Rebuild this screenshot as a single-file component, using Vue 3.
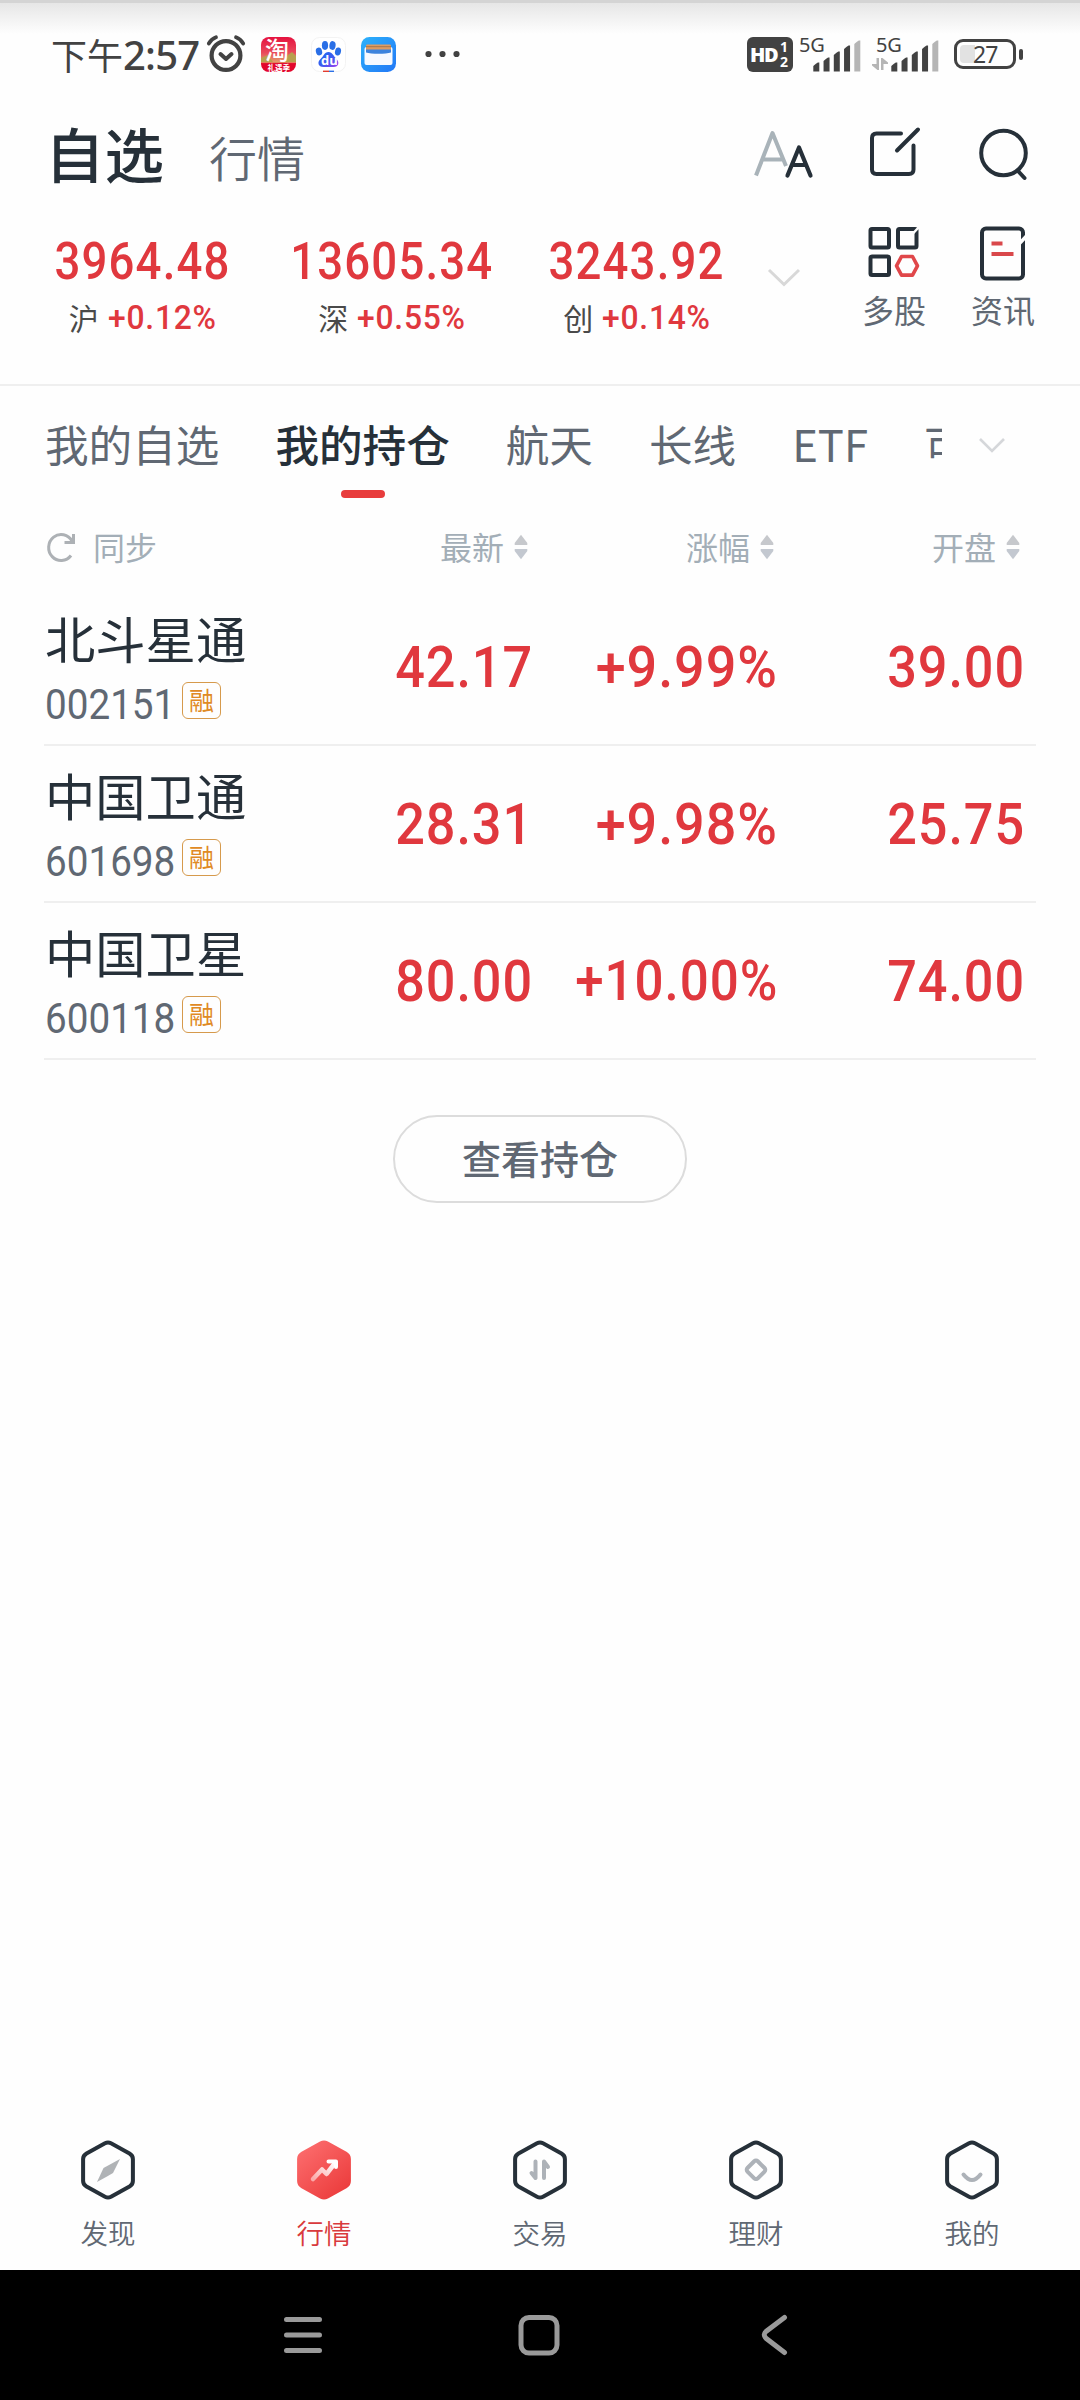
<script setup>
const indices = [
  { value: '3964.48', name: '沪', change: '+0.12%', width: 285 },
  { value: '13605.34', name: '深', change: '+0.55%', width: 214 },
  { value: '3243.92', name: '创', change: '+0.14%', width: 276 },
]
const groups = ['我的自选', '我的持仓', '航天', '长线', 'ETF', '可转债']
const columns = ['最新', '涨幅', '开盘']
const stocks = [
  { name: '北斗星通', code: '002151', last: '42.17', change: '+9.99%', open: '39.00' },
  { name: '中国卫通', code: '601698', last: '28.31', change: '+9.98%', open: '25.75' },
  { name: '中国卫星', code: '600118', last: '80.00', change: '+10.00%', open: '74.00', long: true },
]
const nav = ['发现', '行情', '交易', '理财', '我的']
const signal = [9, 14, 20, 26, 31]
</script>

<template>
  <div class="screen">
    <div class="status">
      <span class="clock">下午<b>2:57</b></span>
      <svg class="alarm" width="42" height="38" viewBox="0 0 42 38" fill="none" stroke="#424242">
        <circle cx="20" cy="20.5" r="14.4" stroke-width="4.2" />
        <path d="M2.8 8.5C4.5 5.5 7 3.4 10 2.3M37.200 8.500C35.500 5.500 33 3.400 30 2.300" stroke-width="3.8" stroke-linecap="round" />
        <path d="M14.500 19l5.500 5 5.500-5" stroke-width="4" stroke-linecap="round" stroke-linejoin="round" />
      </svg>
      <svg class="app" width="35" height="35" viewBox="0 0 35 35">
        <defs>
          <linearGradient id="tb" x1="0" y1="0" x2="0" y2="1">
            <stop offset="0" stop-color="#e5123f" /><stop offset=".45" stop-color="#e94a5c" />
            <stop offset=".72" stop-color="#e3a06a" /><stop offset=".76" stop-color="#e2062c" />
          </linearGradient>
        </defs>
        <rect width="35" height="35" rx="8" fill="url(#tb)" />
        <path d="M27 18l4-3 4 4v6H24zM0 21l7-3 5 7H0z" fill="#b8a04f" />
        <text x="4" y="21.500" class="tao">淘</text>
        <text x="6.500" y="34" class="tao-sub">礼遇季</text>
      </svg>
      <svg class="app" width="35" height="35" viewBox="0 0 35 35">
        <defs>
          <linearGradient id="bd" x1="0" y1="0" x2="1" y2="1">
            <stop offset="0" stop-color="#1c6bf0" /><stop offset=".55" stop-color="#3f5cf0" /><stop offset="1" stop-color="#a03df0" />
          </linearGradient>
        </defs>
        <rect x=".5" y=".5" width="34" height="34" rx="8" fill="#fff" stroke="#f3f3f3" />
        <g fill="#2a6fe6">
          <ellipse cx="8" cy="14.500" rx="3.100" ry="4" transform="rotate(-15 8 14.500)" />
          <ellipse cx="14" cy="8.500" rx="3.100" ry="4.400" />
          <ellipse cx="21.500" cy="8.500" rx="3.100" ry="4.400" transform="rotate(8 21.500 8.500)" />
          <ellipse cx="27" cy="14.500" rx="3" ry="4" transform="rotate(12 27 14.500)" />
        </g>
        <path d="M17.500 15c4 0 5 4 8 7s2.500 8-3 8h-10c-5.500 0-6.500-5-3-8S13 15 17.500 15z" fill="url(#bd)" />
        <text x="10" y="28" class="du">du</text>
        <path d="M12 34.300h6" stroke="#e33b2e" stroke-width="1.400" /><path d="M18 34.300h5" stroke="#2a6fe6" stroke-width="1.400" />
      </svg>
      <svg class="app" width="35" height="35" viewBox="0 0 35 35">
        <defs>
          <linearGradient id="wl" x1="0" y1="0" x2="1" y2="1">
            <stop offset="0" stop-color="#2cb2fb" /><stop offset="1" stop-color="#2277f6" />
          </linearGradient>
        </defs>
        <rect width="35" height="35" rx="8.500" fill="url(#wl)" />
        <rect x="3.500" y="10" width="28" height="18" rx="2" fill="#f6f9ff" />
        <rect x="5" y="7.500" width="25" height="6" rx="1.200" fill="#dd9b62" />
        <rect x="5" y="9" width="25" height="1.200" fill="#b07c50" />
        <path d="M5 12.500h25v3c-5 1.800-20 1.800-25 0z" fill="#3c83dd" />
      </svg>
      <svg class="more" width="36" height="8" viewBox="0 0 36 8" fill="#424242">
        <circle cx="3.500" cy="4" r="3.100" /><circle cx="17.500" cy="4" r="3.100" /><circle cx="31.500" cy="4" r="3.100" />
      </svg>
      <div class="hd"><span class="hd-main">HD</span><span class="hd-nums"><i>1</i><i>2</i></span></div>
      <div v-for="n in 2" :key="n" class="cell" :class="'cell' + n">
        <span class="net">5G</span>
        <svg v-if="n === 2" class="updown" width="16" height="12" viewBox="0 0 16 12" fill="#b5b5b5">
          <path d="M4.500 0H7v12H5.500L0 7.500V6h4.500zM9 0h1.500L16 4.500V6h-4.500v6H9z" />
        </svg>
        <svg class="bars" width="48" height="32" viewBox="0 0 48 32">
          <path v-for="(h, i) in signal" :key="i" :d="`M${i * 10.250 + .3} 31.500V${31.500 - h + 3.500}q3-3 4.500-3.500h1.500v${h}z`"
            :fill="i === 4 ? '#b5b5b5' : '#424242'" />
        </svg>
      </div>
      <div class="battery"><span class="level"></span><span class="pct">27</span></div>
      <span class="nub"></span>
    </div>

    <header class="head">
      <h1>自选</h1>
      <span class="head-tab">行情</span>
      <span class="grow"></span>
      <svg class="fontsize" width="62" height="50" viewBox="0 0 62 50" fill="none" stroke-linecap="round" stroke-linejoin="round">
        <path d="M3 46.500L19.500 4 33 37M8.800 30.500h20" stroke="#a9b3b9" stroke-width="4" stroke-linecap="butt" />
        <path d="M34.500 46.500L46 18.500 57.500 46.500M39 36h14" stroke="#263039" stroke-width="4.200" />
      </svg>
      <svg class="edit" width="54" height="54" viewBox="0 0 54 54" fill="none" stroke="#263039" stroke-width="4" stroke-linecap="round">
        <path d="M32 8.500H7.500q-4.500 0-4.500 4.500V44.500q0 4.500 4.500 4.500H40q4.500 0 4.500-4.500V20.500M28 25.500L49 4.500" />
      </svg>
      <svg class="search" width="54" height="54" viewBox="0 0 54 54" fill="none" stroke="#263039" stroke-width="4" stroke-linecap="round">
        <circle cx="26.500" cy="26" r="22.300" /><path d="M41 44l6.500 7" />
      </svg>
    </header>

    <section class="indices">
      <div v-for="x in indices" :key="x.name" class="index" :style="{ width: x.width + 'px' }">
        <span class="ival num">{{ x.value }}</span>
        <span class="iline"><span class="iname">{{ x.name }}</span><span class="ichg num">{{ x.change }}</span></span>
      </div>
      <svg class="expand" width="34" height="20" viewBox="0 0 34 20" fill="none" stroke="#d8d8d8" stroke-width="3">
        <path d="M2 2l15 14.500L32 2" />
      </svg>
      <div class="tool multi">
        <svg width="54" height="56" viewBox="0 0 54 56" fill="none" stroke="#263039" stroke-width="4">
          <rect x="3.500" y="4" width="18.500" height="18.500" rx="1.500" />
          <rect x="31" y="4" width="18.500" height="18.500" rx="1.500" />
          <path d="M45 9.500l7-7.500" stroke="#fefefe" stroke-width="2.500" />
          <rect x="3.500" y="31.500" width="18.500" height="18.500" rx="1.500" />
          <path d="M34.500 31.500h11l5 9.300-5 9.300h-11l-5-9.300z" stroke="#e0474a" stroke-linejoin="round" stroke-width="3.600" />
        </svg>
        <span>多股</span>
      </div>
      <div class="tool">
        <svg width="54" height="56" viewBox="0 0 54 56" fill="none" stroke="#263039" stroke-width="4">
          <rect x="6" y="3.500" width="41" height="50" rx="4" />
          <path d="M42 20l9-9.500" stroke="#fefefe" stroke-width="3.500" />
          <path d="M15.500 18.500h11M15.500 29h22" stroke="#d9484b" />
        </svg>
        <span>资讯</span>
      </div>
    </section>

    <nav class="groups">
      <div class="track">
        <span v-for="(g, i) in groups" :key="g" class="group" :class="{ active: i === 1 }">{{ g }}</span>
      </div>
      <svg width="28" height="18" viewBox="0 0 28 18" fill="none" stroke="#d5d7da" stroke-width="2.600"><path d="M2 2l12 12L26 2" /></svg>
    </nav>

    <div class="thead">
      <svg class="sync" width="32" height="32" viewBox="0 0 32 32" fill="none" stroke="#adb1b5" stroke-width="3">
        <path d="M26 24.500A12.500 13 0 1 1 27 10" /><path d="M28.500 3v8.500h-9" />
      </svg>
      <span class="sync-label">同步</span>
      <span v-for="(c, i) in columns" :key="c" class="th" :class="'c' + i"><span>{{ c }}</span>
        <svg width="14" height="26" viewBox="0 0 14 26"><path d="M7 .8L13.300 9v2H.7V9z" fill="#c6c8cc" /><path d="M7 25.200L13.300 17v-2H.7v2z" fill="#c3c8d0" /></svg>
      </span>
    </div>

    <div v-for="s in stocks" :key="s.code" class="row">
      <div class="stock">
        <span class="name">{{ s.name }}</span>
        <span class="meta"><span class="code num">{{ s.code }}</span><span class="badge">融</span></span>
      </div>
      <span class="cellv c0"><span class="num">{{ s.last }}</span></span>
      <span class="cellv c1" :class="{ long: s.long }"><span class="num">{{ s.change }}</span></span>
      <span class="cellv c2"><span class="num">{{ s.open }}</span></span>
    </div>

    <button class="view">查看持仓</button>
    <span class="grow"></span>

    <nav class="tabbar">
      <div v-for="(n, i) in nav" :key="n" class="tab" :class="{ on: i === 1 }">
        <svg width="54" height="60" viewBox="0 0 54 60" fill="none" stroke-linecap="round" stroke-linejoin="round">
          <defs v-if="i === 1">
            <linearGradient id="hot" x1="0" y1="0" x2=".8" y2="1"><stop offset="0" stop-color="#fd6f70" /><stop offset="1" stop-color="#ec3d3d" /></linearGradient>
            <linearGradient id="arrow" x1="1" y1="0" x2="0" y2="1"><stop offset="0" stop-color="#fff" /><stop offset="1" stop-color="#fba9a9" /></linearGradient>
          </defs>
          <path d="M24 3.200Q27 1.600 30 3.200L48.500 13.500Q51.900 15.500 51.900 19V41Q51.900 44.500 48.500 46.500L30 56.800Q27 58.400 24 56.800L5.500 46.500Q2.100 44.500 2.100 41V19Q2.100 15.500 5.500 13.500Z"
            :fill="i === 1 ? 'url(#hot)' : 'none'" :stroke="i === 1 ? 'url(#hot)' : '#263039'" stroke-width="4" />
          <path v-if="i === 0" d="M39 19L32 33 26 36.500 16 42 22.500 28 28 25z" fill="#b0b3b6" />
          <path v-if="i === 1" d="M16 39l9-9.500 4.500 4.500L38 23" stroke="url(#arrow)" stroke-width="4.500" />
          <path v-if="i === 1" d="M31.500 21.500H39V27" stroke="#fff" stroke-width="4" />
          <path v-if="i === 2" d="M22.500 21.500V38M22.500 38L18.500 33M31 38V21.500L35 27" stroke="#adb2b8" stroke-width="4" />
          <rect v-if="i === 3" x="19.700" y="22.500" width="14.600" height="14.600" rx="2.500" transform="rotate(45 27 29.800)" stroke="#adb2b8" stroke-width="4" />
          <path v-if="i === 4" d="M18.500 34.500q8.500 11 17 0" stroke="#adb2b8" stroke-width="4" />
        </svg>
        <span>{{ n }}</span>
      </div>
    </nav>

    <div class="sysnav">
      <svg width="40" height="42" viewBox="0 0 40 42" stroke="#9a9a9a" stroke-width="5" stroke-linecap="round"><path d="M2.500 5.500h33M2.500 21h33M2.500 36.500h33" /></svg>
      <svg width="42" height="42" viewBox="0 0 42 42" fill="none" stroke="#9a9a9a" stroke-width="5"><rect x="3" y="3.500" width="36" height="35.500" rx="8" /></svg>
      <svg width="30" height="42" viewBox="0 0 30 42" fill="none" stroke="#9a9a9a" stroke-width="5" stroke-linecap="round"><path d="M24.500 3.500L6 17.500q-3.500 3.300 0 6.800L24.500 38.500" /></svg>
    </div>
  </div>
</template>

<style>
body { background: #fefefe; }
</style>

<style scoped>
.screen {
  width: 1080px; height: 2400px; display: flex; flex-direction: column; overflow: hidden;
  font-family: "Noto Sans CJK SC", sans-serif; font-weight: 400; color: #606873; white-space: nowrap;
  background: linear-gradient(#d4d4d4 0 3px, #e6e6e6 3px, #fefefe 34px);
}
.screen svg { display: block; flex: none; overflow: visible; }
.grow { flex: 1; }
.num { display: inline-block; font-family: Roboto, sans-serif; font-weight: 500; color: #e0383e; }

.status { height: 108px; flex: none; display: flex; align-items: center; padding-left: 51px; color: #424242; }
.clock { width: 155px; font-size: 36px; line-height: 40px; font-weight: 400; display: flex; align-items: center; }
.clock b { font-family: "Noto Sans", sans-serif; font-weight: 500; font-size: 40px; letter-spacing: -.8px; line-height: 40px; margin-top: 2px; }
.alarm { margin-right: 13px; }
.app { margin-right: 15px; }
.tao { font-size: 24px; font-weight: 500; fill: #fff; }
.tao-sub { font-size: 7.500px; font-weight: 700; fill: #fff; }
.du { font-family: "Open Sans", sans-serif; font-size: 13px; font-weight: 700; fill: #fff; }
.more { margin-left: 14px; }
.hd { margin-left: 286px; width: 46px; height: 35px; flex: none; border-radius: 6px; background: #424242; color: #fff; display: flex; align-items: center; padding-left: 3px; box-sizing: border-box; font-family: "Open Sans", sans-serif; }
.hd-main { width: 30px; font-size: 20px; font-weight: 800; letter-spacing: -1.200px; }
.hd-nums { display: flex; flex-direction: column; }
.hd-nums i { font-style: normal; font-weight: 700; font-size: 14px; line-height: 15.500px; }
.cell { height: 36px; width: 63px; flex: none; position: relative; margin-left: 5px; }
.cell2 { width: 70px; margin-left: 8px; }
.net { position: absolute; left: 1px; top: -2px; font: 400 20px/22px "Noto Sans", sans-serif; letter-spacing: -.3px; }
.cell2 .net { left: 7px; }
.bars { position: absolute; right: 0; bottom: 0; }
.updown { position: absolute; left: 3px; bottom: 2px; }
.battery { margin-left: 15px; width: 62px; height: 30px; flex: none; box-sizing: border-box; border: 3px solid #424242; border-radius: 9px; padding: 3px; display: flex; }
.level { width: 15px; border-radius: 4px 0 0 4px; background: #e2e2e2; }
.pct { font: 400 23px/18px "Noto Sans", sans-serif; letter-spacing: -1px; margin-left: -2px; }
.nub { width: 4px; height: 11px; border-radius: 2px; background: #424242; margin-left: 3px; }

.head { height: 92px; flex: none; display: flex; align-items: center; padding: 0 49px 0 45px; }
h1 { margin: -5px 0 0; font-size: 59.500px; line-height: 80px; font-weight: 500; color: #263039; }
.head-tab { margin: 4px 0 0 45px; font-size: 48px; line-height: 70px; font-weight: 350; }
.fontsize { margin-right: 54px; }
.edit { margin: -4px 54px 0 0; }

.indices { height: 186px; flex: none; box-sizing: border-box; border-bottom: 2px solid #efefef; display: flex; align-items: flex-start; }
.index { flex: none; display: flex; flex-direction: column; align-items: center; padding-top: 38px; }
.ival { font-size: 51.500px; line-height: 48px; letter-spacing: 1.300px; transform: scaleX(.885); }
.iline { display: flex; align-items: center; height: 40px; margin-top: 12px; }
.iname { font-size: 30px; line-height: 40px; color: #4a4a4a; margin: -3px 9px 0 0; }
.ichg { font-size: 33.500px; line-height: 40px; letter-spacing: .8px; transform: scaleX(.95); transform-origin: left; margin-right: -6px; }
.expand { margin: 68px 0 0 -8px; }
.tool { display: flex; flex-direction: column; align-items: center; width: 66px; margin: 25px 0 0 43px; font-size: 32px; line-height: 40px; }
.tool span { margin-top: 8px; }
.multi { margin-left: 60px; }

.groups { height: 124px; flex: none; display: flex; align-items: flex-start; }
.track { width: 942px; box-sizing: border-box; height: 124px; overflow: hidden; display: flex; gap: 56px; padding-left: 45px; }
.groups > svg { margin: 51px 0 0 36px; }
.group { flex: none; font-size: 43.600px; line-height: 60px; padding-top: 27px; position: relative; }
.active { font-weight: 500; color: #263039; }
.active::after { content: ""; position: absolute; left: 50%; top: 104px; width: 44px; height: 8px; margin-left: -22px; border-radius: 4px; background: #e83c3c; }

.thead { height: 79px; flex: none; box-sizing: border-box; display: flex; align-items: center; padding: 0 0 5px 45px; font-size: 32px; line-height: 40px; color: #a3aeb7; }
.sync-label { margin: -3px 0 0 16px; width: 64px; }
.th { display: flex; align-items: center; justify-content: flex-end; gap: 10px; }
.th span { margin-top: -3px; }
.th.c0 { width: 371px; }
.th.c1 { width: 246px; }
.th.c2 { width: 246px; }

.row { height: 157px; flex: none; box-sizing: border-box; margin: 0 44px; border-bottom: 2px solid #efefef; display: flex; align-items: center; }
.stock { width: 236px; display: flex; flex-direction: column; padding-left: 1px; }
.name { font-size: 50.300px; line-height: 60px; color: #263039; }
.meta { display: flex; align-items: center; height: 44px; margin-top: 15px; }
.code { width: 137px; font-size: 42px; line-height: 44px; font-weight: 400; color: #606873; transform: scaleX(.92); transform-origin: left; margin-top: 2px; }
.badge { width: 39px; height: 37px; box-sizing: border-box; border: 1.500px solid #d69a4c; border-radius: 6px; color: #e08a24; font-size: 25px; line-height: 33px; text-align: center; margin-top: -7px; }
.cellv { display: flex; justify-content: flex-end; font-size: 58px; letter-spacing: 1px; }
.cellv .num { transform: scaleX(.9); transform-origin: right; }
.cellv.c1 .num { transform: scaleX(.93); }
.cellv.c0 { width: 252px; }
.cellv.c1 { width: 245px; }
.cellv.c2 { width: 247px; }
.cellv.long { font-size: 55px; }

.view { align-self: center; margin-top: 55px; width: 294px; height: 88px; border: 2px solid #dcdcdc; border-radius: 44px; background: none; padding: 0 0 4px; font: 500 39px/60px "Noto Sans CJK SC", sans-serif; color: #606873; }

.tabbar { height: 130px; flex: none; display: flex; }
.tab { width: 216px; display: flex; flex-direction: column; align-items: center; font-size: 27.500px; line-height: 40px; font-weight: 350; }
.tab span { margin-top: 12px; }
.on { color: #d93a3d; }

.sysnav { height: 130px; flex: none; background: #000; display: flex; align-items: center; padding-left: 284px; }
.sysnav svg + svg { margin-left: 194px; }
.sysnav svg + svg + svg { margin-left: 200px; }
</style>
